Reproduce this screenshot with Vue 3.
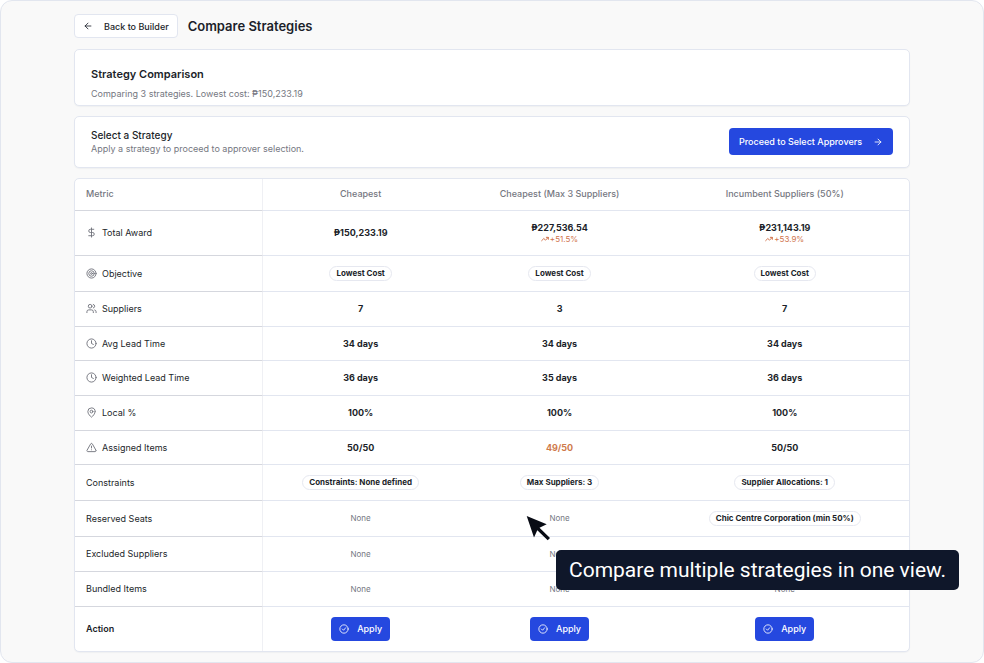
<script setup>
const strategies = ['Cheapest', 'Cheapest (Max 3 Suppliers)', 'Incumbent Suppliers (50%)']

const icons = {
  dollar: '<path d="M12 2v20M17 5H9.500a3.500 3.500 0 0 0 0 7h5a3.500 3.500 0 0 1 0 7H6"/>',
  target: '<circle cx="12" cy="12" r="10"/><circle cx="12" cy="12" r="6"/><circle cx="12" cy="12" r="2"/>',
  users: '<path d="M16 21v-2a4 4 0 0 0-4-4H6a4 4 0 0 0-4 4v2"/><circle cx="9" cy="7" r="4"/><path d="M22 21v-2a4 4 0 0 0-3-3.870M16 3.130a4 4 0 0 1 0 7.750"/>',
  clock: '<circle cx="12" cy="12" r="10"/><path d="M12 6v6l4 2"/>',
  pin: '<path d="M20 10c0 4.990-5.540 10.190-7.400 11.800a1 1 0 0 1-1.200 0C9.540 20.190 4 14.990 4 10a8 8 0 0 1 16 0"/><circle cx="12" cy="10" r="3"/>',
  alert: '<path d="m21.730 18-8-14a2 2 0 0 0-3.480 0l-8 14A2 2 0 0 0 4 21h16a2 2 0 0 0 1.730-3M12 9v4M12 17h.010"/>',
}

const rows = [
  { label: 'Total Award', icon: 'dollar', size: 'tall', type: 'money', cells: [{ text: '₱150,233.19' }, { text: '₱227,536.54', delta: '+51.5%' }, { text: '₱231,143.19', delta: '+53.9%' }] },
  { label: 'Objective', icon: 'target', size: 'roomy', type: 'badge', cells: [{ text: 'Lowest Cost' }, { text: 'Lowest Cost' }, { text: 'Lowest Cost' }] },
  { label: 'Suppliers', icon: 'users', size: 'regular', type: 'value', cells: [{ text: '7' }, { text: '3' }, { text: '7' }] },
  { label: 'Avg Lead Time', icon: 'clock', size: 'dense', type: 'value', cells: [{ text: '34 days' }, { text: '34 days' }, { text: '34 days' }] },
  { label: 'Weighted Lead Time', icon: 'clock', size: 'regular', type: 'value', cells: [{ text: '36 days' }, { text: '35 days' }, { text: '36 days' }] },
  { label: 'Local %', icon: 'pin', size: 'regular', type: 'value', cells: [{ text: '100%' }, { text: '100%' }, { text: '100%' }] },
  { label: 'Assigned Items', icon: 'alert', size: 'dense', type: 'value', cells: [{ text: '50/50' }, { text: '49/50', warn: true }, { text: '50/50' }] },
  { label: 'Constraints', size: 'roomy', type: 'badge', cells: [{ text: 'Constraints: None defined' }, { text: 'Max Suppliers: 3' }, { text: 'Supplier Allocations: 1' }] },
  { label: 'Reserved Seats', size: 'roomy', type: 'badge', cells: [{ none: true }, { none: true }, { text: 'Chic Centre Corporation (min 50%)' }] },
  { label: 'Excluded Suppliers', size: 'regular', type: 'badge', cells: [{ none: true }, { none: true }, { none: true }] },
  { label: 'Bundled Items', size: 'regular', type: 'badge', cells: [{ none: true }, { none: true }, { none: true }] },
]
</script>

<template>
  <div class="frame">
    <main class="page">
      <header class="top">
        <button class="btn back" type="button">
          <svg class="icon" viewBox="0 0 24 24"><path d="m12 19-7-7 7-7M19 12H5" /></svg>
          Back to Builder
        </button>
        <h1>Compare Strategies</h1>
      </header>

      <section class="card summary">
        <h2>Strategy Comparison</h2>
        <p>Comparing 3 strategies. Lowest cost: ₱150,233.19</p>
      </section>

      <section class="card select">
        <div>
          <h3>Select a Strategy</h3>
          <p>Apply a strategy to proceed to approver selection.</p>
        </div>
        <button class="btn primary proceed" type="button">
          Proceed to Select Approvers
          <svg class="icon" viewBox="0 0 24 24"><path d="M5 12h14m-7-7 7 7-7 7" /></svg>
        </button>
      </section>

      <section class="card table-card">
        <table>
          <colgroup>
            <col class="c-metric" /><col class="c-first" /><col class="c-second" /><col />
          </colgroup>
          <thead>
            <tr>
              <th scope="col" class="label">Metric</th>
              <th v-for="s in strategies" :key="s" scope="col">{{ s }}</th>
            </tr>
          </thead>
          <tbody>
            <tr v-for="row in rows" :key="row.label" :class="row.size">
              <th scope="row" class="label">
                <span class="metric">
                  <svg v-if="row.icon" class="icon muted" viewBox="0 0 24 24" v-html="icons[row.icon]"></svg>
                  {{ row.label }}
                </span>
              </th>
              <td v-for="(cell, i) in row.cells" :key="i">
                <span v-if="cell.none" class="none">None</span>
                <span v-else-if="row.type === 'badge'" class="badge">{{ cell.text }}</span>
                <template v-else>
                  <div class="value" :class="{ warn: cell.warn }">{{ cell.text }}</div>
                  <div v-if="cell.delta" class="delta">
                    <svg class="trend" viewBox="0 0 24 24"><path d="m22 7-8.500 8.500-5-5L2 17M16 7h6v6" /></svg>
                    {{ cell.delta }}
                  </div>
                </template>
              </td>
            </tr>
            <tr class="action">
              <th scope="row" class="label strong">Action</th>
              <td v-for="s in strategies" :key="s">
                <button class="btn primary apply" type="button" :aria-label="'Apply ' + s">
                  <svg class="icon" viewBox="0 0 24 24"><circle cx="12" cy="12" r="10" /><path d="m8 12 3 3 5-6" /></svg>
                  Apply
                </button>
              </td>
            </tr>
          </tbody>
        </table>
      </section>
    </main>

    <svg class="cursor" viewBox="0 0 26 28">
      <path d="M1.700 2 21.700 10.300 14.500 13.800 25 24 22.700 26.300 12.300 16.200 9 23.500Z" />
    </svg>
    <div class="tooltip" role="tooltip">Compare multiple strategies in one view.</div>
  </div>
</template>

<style>
body {
  background: #ffffff;
}
</style>

<style scoped>
* {
  box-sizing: border-box;
}
.frame {
  position: relative;
  min-height: 100vh;
  padding: 13px 73px 10px;
  border: 1px solid #e2e6ef;
  border-radius: 12px;
  background: #f9f9f9;
  color: #1c1f2a;
  font-family: Inter, "Liberation Sans", sans-serif;
  font-size: 9px;
  line-height: 13px;
}
.page {
  display: flex;
  flex-direction: column;
  gap: 10px;
}
h1, h2, h3, p {
  margin: 0;
}
h1 {
  font-size: 13px;
  line-height: 20px;
  font-weight: 600;
}
h2 {
  font-size: 11px;
  line-height: 16px;
  font-weight: 600;
}
h3 {
  font-size: 10px;
  line-height: 14px;
  font-weight: 500;
}
p {
  color: #75777f;
}
.top {
  display: flex;
  align-items: center;
  gap: 10px;
  padding-bottom: 1px;
}
.btn {
  display: inline-flex;
  align-items: center;
  border: 1px solid transparent;
  border-radius: 4px;
  font: 500 9px/13px Inter, "Liberation Sans", sans-serif;
  white-space: nowrap;
}
.primary {
  background: #2548df;
  color: #ffffff;
}
.back {
  height: 24px;
  padding: 0 8px;
  gap: 11px;
  border-color: #e2e6f0;
  background: #ffffff;
  color: #1c1f2a;
}
.icon {
  flex: none;
  width: 10px;
  height: 10px;
  fill: none;
  stroke: currentColor;
  stroke-width: 2;
  stroke-linecap: round;
  stroke-linejoin: round;
}
.muted {
  width: 11px;
  height: 11px;
  color: #70727b;
}
.card {
  border: 1px solid #e2e6f0;
  border-radius: 5px;
  background: #ffffff;
  box-shadow: 0 1px 1px rgba(30, 40, 80, 0.04);
}
.summary {
  display: flex;
  flex-direction: column;
  gap: 5px;
  padding: 16px 16px 5px;
}
.select {
  display: flex;
  align-items: center;
  justify-content: space-between;
  padding: 11px 16px 12px;
}
.proceed {
  height: 27px;
  padding: 0 9px;
  gap: 11px;
}
.table-card {
  overflow: hidden;
}
table {
  width: 100%;
  table-layout: fixed;
  border-collapse: separate;
  border-spacing: 0;
}
.c-metric {
  width: 22.5%;
}
.c-first {
  width: 23.5%;
}
.c-second {
  width: 24.2%;
}
th, td {
  padding: 0 0 1px;
  border-bottom: 1px solid #e2e6f0;
  text-align: center;
  vertical-align: middle;
}
thead th {
  height: 32px;
  padding-bottom: 2px;
  color: #75777f;
  font-weight: 500;
}
.label {
  padding-left: 11px;
  border-right: 1px solid #eff0f4;
  border-bottom-color: #d5d7de;
  text-align: left;
}
tbody .label {
  font-weight: 400;
}
tbody .strong {
  font-weight: 600;
}
.metric {
  display: flex;
  align-items: center;
  gap: 5px;
}
.tall td {
  height: 45px;
}
.roomy td {
  height: 36px;
}
.regular td {
  height: 35px;
}
.dense td {
  height: 34px;
}
.action td {
  height: 44px;
}
.action > * {
  border-bottom: 0;
}
.value {
  font-weight: 700;
}
.warn {
  color: #cf7a4c;
}
.delta {
  display: flex;
  align-items: center;
  justify-content: center;
  gap: 1px;
  color: #d0734c;
  font-size: 8px;
  line-height: 11px;
}
.trend {
  width: 8px;
  height: 8px;
  fill: none;
  stroke: currentColor;
  stroke-width: 3;
  stroke-linecap: round;
  stroke-linejoin: round;
}
.badge {
  display: inline-block;
  padding: 0 6px;
  border: 1px solid #e6e8f0;
  border-radius: 8px;
  font-size: 8px;
  font-weight: 700;
}
.none {
  color: #75777f;
  font-size: 8px;
}
.apply {
  height: 24px;
  padding: 0 7px;
  gap: 8px;
  vertical-align: middle;
}
.cursor {
  position: absolute;
  top: 513px;
  left: 524px;
  width: 26px;
  height: 28px;
  fill: #080b14;
}
.tooltip {
  position: absolute;
  top: 549px;
  left: 555px;
  padding: 0 13px;
  border-radius: 5px;
  background: #0f172a;
  color: #ffffff;
  font-family: Roboto, sans-serif;
  font-size: 21px;
  line-height: 40px;
  white-space: nowrap;
}
</style>
